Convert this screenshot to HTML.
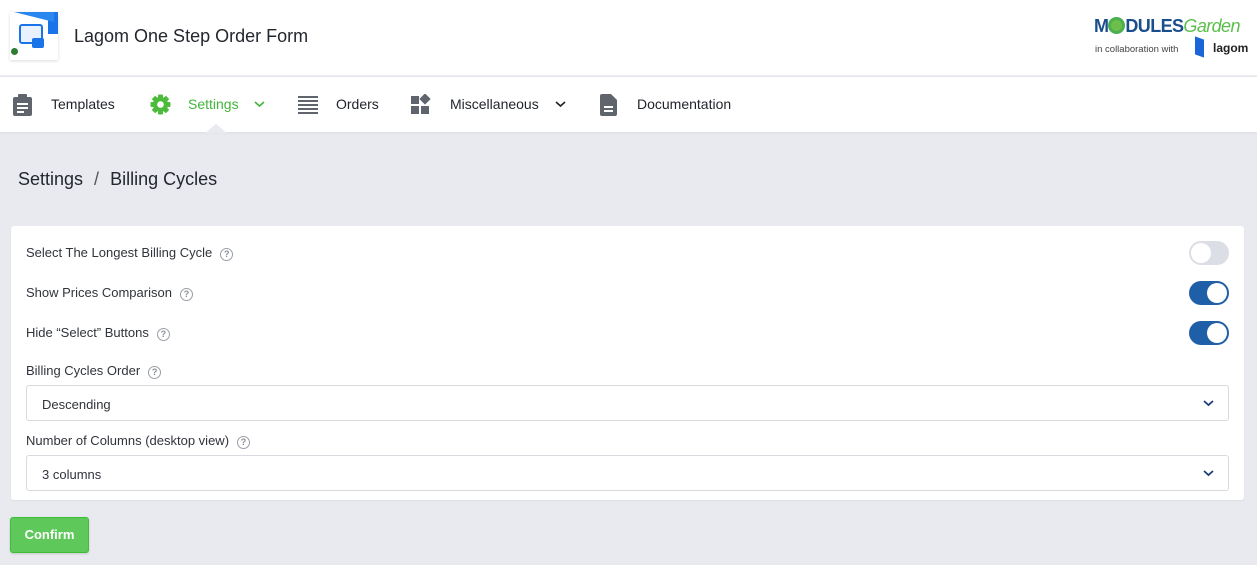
<!DOCTYPE html><html><head><style>
*{box-sizing:border-box;margin:0;padding:0}
body{width:1257px;height:565px;background:#e9eaef;font-family:"Liberation Sans",sans-serif;position:relative;overflow:hidden;color:#2b2f36}
.top{position:absolute;left:0;top:0;width:1257px;height:76px;background:#fff;border-bottom:1px solid #eceef2}
.nav{position:absolute;left:0;top:77px;width:1257px;height:55px;background:#fff;box-shadow:0 1px 3px rgba(0,0,0,.06)}
.ni{position:absolute;top:96px;font-size:14px;color:#1f2329}
.t{position:absolute;font-size:13px;color:#30343b;white-space:nowrap}
.q{display:inline-block;width:13px;height:13px;border:1.3px solid #9a9ea6;border-radius:50%;font-size:9px;line-height:11px;text-align:center;color:#8a8e96;vertical-align:0px;margin-left:8px;font-weight:bold}
.tg{position:absolute;left:1189px;width:40px;height:24px;border-radius:12px}
.tg i{position:absolute;top:2px;width:20px;height:20px;border-radius:50%;background:#fff}
.sel{position:absolute;left:26px;width:1203px;height:36px;border:1px solid #d8dae0;border-radius:3px;font-size:13px;padding:11px 15px;color:#30343b}
.sel svg{position:absolute;right:14px;top:13px}
</style></head><body>
<div class="top">
 <div style="position:absolute;left:10px;top:12px;width:48px;height:48px;background:#fff;box-shadow:0 1px 3px rgba(0,0,0,.15)">
  <div style="position:absolute;right:0;top:0;width:10px;height:22px;background:#1a73e8"></div>
  <div style="position:absolute;left:4px;top:0;width:40px;height:10px;background:#2b87f0;clip-path:polygon(0 0,100% 0,100% 100%)"></div>
  <div style="position:absolute;left:9px;top:12px;width:24px;height:20px;border:2px solid #1a73e8;border-radius:3px;background:#e8f1fd"></div>
  <div style="position:absolute;left:22px;top:26px;width:12px;height:10px;background:#1a73e8;border-radius:2px"></div>
  <div style="position:absolute;left:1px;top:36px;width:7px;height:7px;background:#2e7d32;border-radius:50%"></div>
 </div>
 <div style="position:absolute;left:74px;top:26px;font-size:18px;color:#23272e">Lagom One Step Order Form</div>
 <div style="position:absolute;left:1094px;top:16px;font-size:18px;font-weight:bold;color:#1b4f8c;letter-spacing:-.6px;white-space:nowrap;line-height:20px">M<span style="display:inline-block;width:17px;height:17px;border:3px solid #4caf50;border-radius:50%;vertical-align:-2px;background:#6dbf4b"></span>DULES<span style="font-weight:normal;color:#5cbf4a;font-style:italic">Garden</span></div>
 <div style="position:absolute;left:1095px;top:44px;font-size:9.5px;color:#444;white-space:nowrap">in collaboration with</div>
 <div style="position:absolute;left:1195px;top:38px;width:9px;height:18px;background:#1a66d9;transform:skewY(20deg)"></div>
 <div style="position:absolute;left:1213px;top:41px;font-size:12px;font-weight:bold;color:#222">lagom</div>
</div>
<div class="nav"></div>
<svg style="position:absolute;left:13px;top:94px" width="19" height="22" viewBox="0 0 19 22"><rect x="0" y="3" width="19" height="19" rx="2" fill="#60646c"/><rect x="5" y="0" width="9" height="6" rx="1" fill="#60646c"/><rect x="4" y="9" width="11" height="2" fill="#fff"/><rect x="4" y="13" width="11" height="2" fill="#fff"/><rect x="4" y="17" width="7" height="2" fill="#fff"/></svg>
<div class="ni" style="left:51px">Templates</div>
<svg style="position:absolute;left:150px;top:94px" width="21" height="21" viewBox="0 0 21 21"><g fill="#4cbb3c" transform="translate(10.5 10.5)"><rect x="-2.5" y="-10" width="5" height="20" rx="1"/><rect x="-2.5" y="-10" width="5" height="20" rx="1" transform="rotate(45)"/><rect x="-2.5" y="-10" width="5" height="20" rx="1" transform="rotate(90)"/><rect x="-2.5" y="-10" width="5" height="20" rx="1" transform="rotate(135)"/><circle r="7.5"/><circle r="3.3" fill="#fff"/></g></svg>
<div class="ni" style="left:188px;color:#43b53a">Settings</div>
<svg style="position:absolute;left:254px;top:100px" width="11" height="8"><path d="M1 2l4.5 4L10 2" stroke="#43b53a" stroke-width="1.6" fill="none"/></svg>
<div style="position:absolute;left:205px;top:124px;width:0;height:0;border-left:11px solid transparent;border-right:11px solid transparent;border-bottom:9px solid #e9eaef"></div>
<svg style="position:absolute;left:298px;top:96px" width="20" height="18"><g fill="#60646c"><rect y="0" width="20" height="2"/><rect y="4" width="20" height="2"/><rect y="8" width="20" height="2"/><rect y="12" width="20" height="2"/><rect y="16" width="20" height="2"/></g></svg>
<div class="ni" style="left:336px">Orders</div>
<svg style="position:absolute;left:411px;top:94px" width="21" height="21"><g fill="#60646c"><rect x="0" y="2" width="8" height="8"/><rect x="0" y="12" width="8" height="8"/><rect x="10" y="12" width="8" height="8"/><rect x="10" y="1" width="8" height="8" transform="rotate(45 14 5)"/></g></svg>
<div class="ni" style="left:450px">Miscellaneous</div>
<svg style="position:absolute;left:555px;top:100px" width="11" height="8"><path d="M1 2l4.5 4L10 2" stroke="#222" stroke-width="1.6" fill="none"/></svg>
<svg style="position:absolute;left:600px;top:94px" width="17" height="22"><path d="M2 0h9l6 6v14a2 2 0 01-2 2H2a2 2 0 01-2-2V2a2 2 0 012-2z" fill="#60646c"/><rect x="4" y="12" width="9" height="2" fill="#fff"/><rect x="4" y="16" width="9" height="2" fill="#fff"/></svg>
<div class="ni" style="left:637px">Documentation</div>
<div style="position:absolute;left:18px;top:169px;font-size:18px;color:#23272e">Settings <span style="margin:0 6px;color:#555">/</span> Billing Cycles</div>
<div style="position:absolute;left:11px;top:226px;width:1233px;height:274px;background:#fff;border-radius:3px;box-shadow:0 1px 2px rgba(0,0,0,.05)"></div>
<div class="t" style="left:26px;top:245px">Select The Longest Billing Cycle<span class="q">?</span></div>
<div class="t" style="left:26px;top:285px">Show Prices Comparison<span class="q">?</span></div>
<div class="t" style="left:26px;top:325px">Hide “Select” Buttons<span class="q">?</span></div>
<div class="tg" style="top:241px;background:#dcdee5"><i style="left:2px"></i></div>
<div class="tg" style="top:281px;background:#1f5fa8"><i style="left:18px"></i></div>
<div class="tg" style="top:321px;background:#1f5fa8"><i style="left:18px"></i></div>
<div class="t" style="left:26px;top:363px">Billing Cycles Order<span class="q">?</span></div>
<div class="sel" style="top:385px">Descending<svg width="11" height="8"><path d="M1 2l4.5 4L10 2" stroke="#1f3d7a" stroke-width="1.8" fill="none"/></svg></div>
<div class="t" style="left:26px;top:433px">Number of Columns (desktop view)<span class="q">?</span></div>
<div class="sel" style="top:455px">3 columns<svg width="11" height="8"><path d="M1 2l4.5 4L10 2" stroke="#1f3d7a" stroke-width="1.8" fill="none"/></svg></div>
<div style="position:absolute;left:10px;top:517px;width:79px;height:36px;background:#5ec95a;border:1px solid #3cbf36;border-radius:3px;color:#fff;font-size:13px;font-weight:bold;text-align:center;line-height:34px;box-shadow:0 1px 2px rgba(0,0,0,.15)">Confirm</div>
</body></html>
